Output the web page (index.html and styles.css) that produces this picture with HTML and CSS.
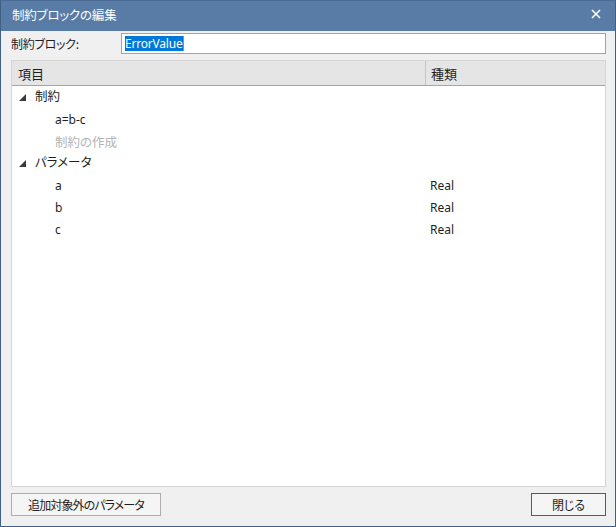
FILE: index.html
```html
<!DOCTYPE html>
<html lang="ja">
<head>
<meta charset="utf-8">
<link rel="stylesheet" href="styles.css">
</head>
<body>
<div class="window">
  <div class="titlebar">
    <span class="title">制約ブロックの編集</span>
    <svg class="close" width="10" height="10" viewBox="0 0 10 10"><path d="M1 1L9 9M9 1L1 9" stroke="#fff" stroke-width="1.6"/></svg>
  </div>
  <div class="content">
    <div class="field">
      <span class="label">制約ブロック:</span>
      <div class="input"><span class="sel">ErrorValue</span><span class="caret"></span></div>
    </div>
    <div class="table">
      <div class="thead">
        <div class="col1">項目</div>
        <div class="col2">種類</div>
      </div>
      <div class="tbody">
        <div class="row group"><svg class="tri" width="7" height="7" viewBox="0 0 7 7"><polygon points="7,0 7,7 0,7" fill="#3a3a3a"/></svg><span class="gl">制約</span></div>
        <div class="row"><span class="child">a=b-c</span></div>
        <div class="row"><span class="child muted">制約の作成</span></div>
        <div class="row group"><svg class="tri" width="7" height="7" viewBox="0 0 7 7"><polygon points="7,0 7,7 0,7" fill="#3a3a3a"/></svg><span class="gl">パラメータ</span></div>
        <div class="row"><span class="child">a</span><span class="type">Real</span></div>
        <div class="row"><span class="child">b</span><span class="type">Real</span></div>
        <div class="row"><span class="child">c</span><span class="type">Real</span></div>
      </div>
    </div>
    <div class="buttons">
      <button class="btn wide">追加対象外のパラメータ</button>
      <button class="btn primary">閉じる</button>
    </div>
  </div>
</div>
</body>
</html>
```
FILE: styles.css
```css
html, body {
  margin: 0;
  padding: 0;
  background: #f0f0f0;
}
body {
  font-family: "Noto Sans CJK JP", "Noto Sans", sans-serif;
  font-size: 12px;
  color: #1e1e1e;
  font-feature-settings: "palt";
}
.window {
  width: 616px;
  height: 527px;
  box-sizing: border-box;
  border: 1px solid #3f5f86;
  border-top: none;
  display: flex;
  flex-direction: column;
  background: #f0f0f0;
}
.titlebar {
  height: 31px;
  background: #587ca6;
  border-top: 1px solid #4a6c94;
  box-sizing: border-box;
  display: flex;
  align-items: center;
  justify-content: space-between;
  padding: 0 14px 3px 11px;
  color: #fff;
}
.title {
  font-size: 12.5px;
  letter-spacing: -0.2px;
}
.close {
  margin-top: -2px;
}
.content {
  flex: 1;
  display: flex;
  flex-direction: column;
  padding: 2px 9px 10px 10px;
}
.field {
  display: flex;
  align-items: center;
  height: 21px;
}
.label {
  width: 110px;
  letter-spacing: -0.3px;
}
.input {
  flex: 1;
  height: 21px;
  box-sizing: border-box;
  border: 1px solid #a3a3a3;
  background: #fff;
  display: flex;
  align-items: center;
  padding-left: 3px;
}
.sel {
  background: #0078d7;
  color: #fff;
  line-height: 15px;
  font-size: 12px;
  font-family: "Noto Sans", sans-serif;
  letter-spacing: -0.2px;
}
.caret {
  width: 1px;
  height: 15px;
  background: #e07a20;
}
.table {
  margin-top: 6px;
  flex: 1;
  border: 1px solid #d5d5d5;
  background: #fff;
  display: flex;
  flex-direction: column;
}
.thead {
  height: 24px;
  background: #e5e5e5;
  border-bottom: 1px solid #a5a5a5;
  display: flex;
  align-items: stretch;
  font-size: 13px;
}
.col1 {
  width: 407px;
  padding-left: 6px;
  border-right: 1px solid #c5c5c5;
  display: flex;
  align-items: center;
}
.col2 {
  padding-left: 5px;
  display: flex;
  align-items: center;
}
.row {
  height: 22px;
  display: flex;
  align-items: center;
}
.tri {
  margin-left: 7px;
  margin-right: 9px;
}
.gl {
  font-size: 12.5px;
  line-height: 22px;
  position: relative;
  top: -1px;
}
.child {
  margin-left: 43px;
  width: 375px;
  font-family: "Noto Sans", "Noto Sans CJK JP", sans-serif;
}
.muted {
  color: #b4b4b4;
  font-family: "Noto Sans CJK JP", sans-serif;
  font-size: 12.5px;
}
.type {
  font-family: "Noto Sans", sans-serif;
}
.buttons {
  display: flex;
  justify-content: space-between;
  margin-top: 6px;
}
.btn {
  height: 23px;
  box-sizing: border-box;
  border: 1px solid #adadad;
  background: #f5f5f5;
  font-family: "Noto Sans CJK JP", sans-serif;
  font-feature-settings: "palt";
  font-size: 12px;
  color: #1e1e1e;
  padding: 0;
}
.wide {
  width: 150px;
  letter-spacing: -0.9px;
}
.primary {
  width: 75px;
  border-color: #3f5f86;
}
```
